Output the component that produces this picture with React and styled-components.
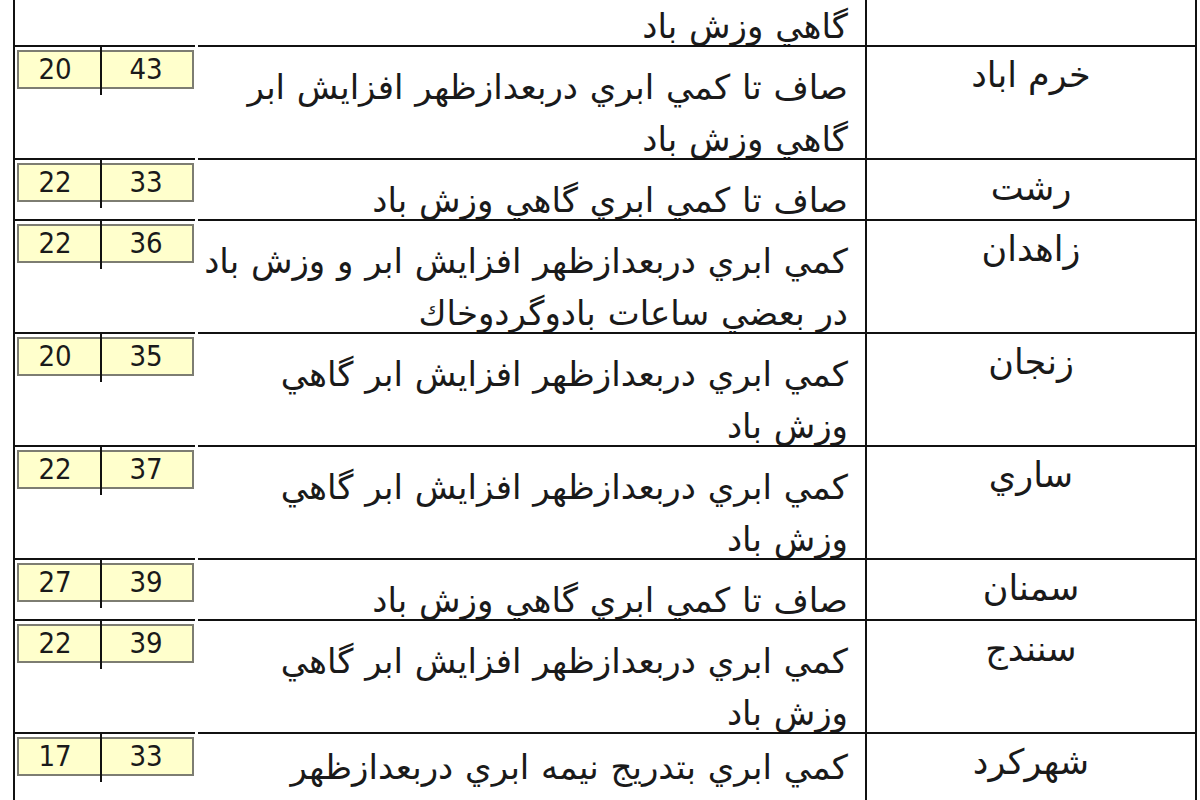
import React from 'react';
import styled, { createGlobalStyle } from 'styled-components';

const GlobalStyle = createGlobalStyle`
  html, body {
    margin: 0;
    padding: 0;
    background: #fff;
    height: 800px;
    overflow: hidden;
  }
  body {
    font-family: Tahoma, "DejaVu Sans", sans-serif;
    color: #111;
  }
`;

const rows = [
  { city: '', lines: ['گاهي وزش باد'], partial: true },
  {
    city: 'خرم اباد',
    min: 20,
    max: 43,
    lines: ['صاف تا كمي ابري دربعدازظهر افزايش ابر', 'گاهي وزش باد'],
  },
  { city: 'رشت', min: 22, max: 33, lines: ['صاف تا كمي ابري گاهي وزش باد'] },
  {
    city: 'زاهدان',
    min: 22,
    max: 36,
    lines: ['كمي ابري دربعدازظهر افزايش ابر و وزش باد', 'در بعضي ساعات بادوگردوخاك'],
  },
  {
    city: 'زنجان',
    min: 20,
    max: 35,
    lines: ['كمي ابري دربعدازظهر افزايش ابر گاهي', 'وزش باد'],
  },
  {
    city: 'ساري',
    min: 22,
    max: 37,
    lines: ['كمي ابري دربعدازظهر افزايش ابر گاهي', 'وزش باد'],
  },
  { city: 'سمنان', min: 27, max: 39, lines: ['صاف تا كمي ابري گاهي وزش باد'] },
  {
    city: 'سنندج',
    min: 22,
    max: 39,
    lines: ['كمي ابري دربعدازظهر افزايش ابر گاهي', 'وزش باد'],
  },
  {
    city: 'شهركرد',
    min: 17,
    max: 33,
    lines: ['كمي ابري بتدريج نيمه ابري دربعدازظهر'],
    open: true,
  },
];

function App() {
  return (
    <>
      <GlobalStyle />
      <Sheet>
        {rows.map((row, i) => (
          <Row key={i} $partial={row.partial} $open={row.open}>
            <TempCell $partial={row.partial}>
              {!row.partial && (
                <TempBox>
                  <Temp $low>{row.min}</Temp>
                  <Temp>{row.max}</Temp>
                </TempBox>
              )}
            </TempCell>
            <DescCell $partial={row.partial} $open={row.open}>
              {row.lines.map((line) => (
                <Line key={line}>{line}</Line>
              ))}
            </DescCell>
            <CityCell $partial={row.partial}>{row.city}</CityCell>
          </Row>
        ))}
      </Sheet>
    </>
  );
}

const Sheet = styled.div`
  width: 1184px;
  margin-left: 13px;
  border-left: 2px solid #111;
`;

const Row = styled.div`
  display: grid;
  grid-template-columns: 182px 668px 332px;
  grid-template-rows: ${(p) => (p.$partial ? '45px' : 'auto')};
  min-height: ${(p) => (p.$open ? '100px' : '0')};
`;

const TempCell = styled.div`
  position: relative;
  border-top: ${(p) => (p.$partial ? 'none' : '2px solid #111')};
  margin-right: 2px;
  padding: 3px 0 0 2px;
`;

const TempBox = styled.div`
  display: flex;
  width: 177px;
  height: 39px;
  box-sizing: border-box;
  background: #ffffcc;
  border: 2px solid #7d7d72;
`;

const Temp = styled.div`
  position: relative;
  display: flex;
  align-items: center;
  justify-content: center;
  width: ${(p) => (p.$low ? '82px' : '93px')};
  padding-right: ${(p) => (p.$low ? '9px' : '0')};
  box-sizing: border-box;
  font-family: Tahoma, "DejaVu Sans", sans-serif;
  font-stretch: condensed;
  font-size: 29px;
  line-height: 1;
  color: #1a1a1a;

  ${(p) =>
    p.$low &&
    `
    &::after {
      content: '';
      position: absolute;
      right: -2px;
      top: -7px;
      width: 2px;
      height: 50px;
      background: #111;
    }
  `}
`;

const DescCell = styled.div`
  display: flex;
  flex-direction: column;
  justify-content: ${(p) => (p.$open ? 'flex-start' : 'flex-end')};
  direction: rtl;
  border-top: ${(p) => (p.$partial ? 'none' : '2px solid #111')};
  margin-left: 1px;
  padding: ${(p) => (p.$open ? '0 17px 0 0' : '7px 17px 0 0')};
  overflow: visible;
`;

const Line = styled.div`
  white-space: nowrap;
  text-align: right;
  font-family: Tahoma, "DejaVu Sans", sans-serif;
  font-size: 34px;
  word-spacing: 1px;
  padding-top: 15px;
  line-height: 37px;
  color: #1a1a1a;
`;

const CityCell = styled.div`
  direction: rtl;
  text-align: center;
  border-top: ${(p) => (p.$partial ? 'none' : '2px solid #111')};
  border-left: 2px solid #111;
  border-right: 2px solid #111;
  padding-top: 4px;
  font-family: Tahoma, "DejaVu Sans", sans-serif;
  font-size: 35px;
  line-height: 48px;
  color: #1a1a1a;
`;

export default App;
